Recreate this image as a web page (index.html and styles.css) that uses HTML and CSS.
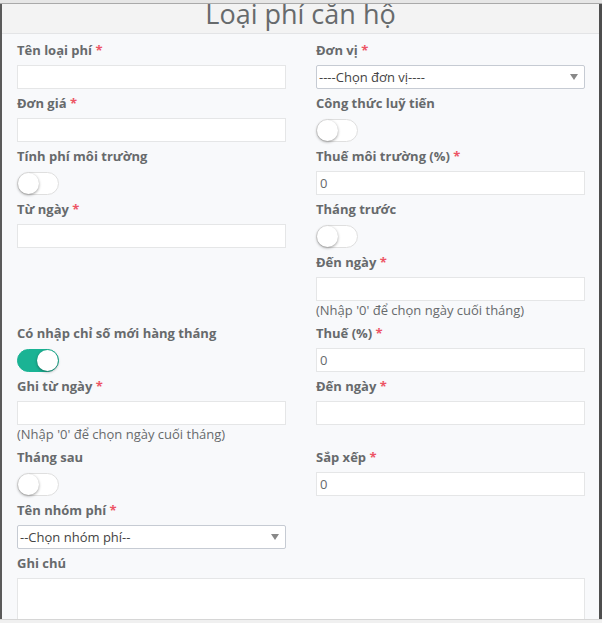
FILE: index.html
```html
<!DOCTYPE html>
<html lang="vi">
<head>
<meta charset="utf-8">
<title>Loại phí căn hộ</title>
<link rel="stylesheet" href="styles.css">
</head>
<body>
<div class="topbar"></div>
<div class="stage">
  <div class="backdrop-left"></div>
  <div class="modal">
    <div class="modal-header"><h2 class="title">Loại phí căn hộ</h2></div>
    <div class="modal-body">
      <div class="cell">
        <div class="group"><label class="lbl">Tên loại phí <span class="req">*</span></label><input class="field" type="text"></div>
      </div>
      <div class="cell">
        <div class="group"><label class="lbl">Đơn vị <span class="req">*</span></label>
          <div class="select"><span>----Chọn đơn vị----</span><span class="caret"></span></div></div>
      </div>

      <div class="cell">
        <div class="group"><label class="lbl">Đơn giá <span class="req">*</span></label><input class="field" type="text"></div>
      </div>
      <div class="cell">
        <div class="group"><label class="lbl">Công thức luỹ tiến</label><div class="switch-box"><span class="switch"><span class="knob"></span></span></div></div>
      </div>

      <div class="cell">
        <div class="group"><label class="lbl">Tính phí môi trường</label><div class="switch-box"><span class="switch"><span class="knob"></span></span></div></div>
      </div>
      <div class="cell">
        <div class="group"><label class="lbl">Thuế môi trường (%) <span class="req">*</span></label><input class="field" type="text" value="0"></div>
      </div>

      <div class="cell">
        <div class="group"><label class="lbl">Từ ngày <span class="req">*</span></label><input class="field" type="text"></div>
      </div>
      <div class="cell">
        <div class="group"><label class="lbl">Tháng trước</label><div class="switch-box"><span class="switch"><span class="knob"></span></span></div></div>
        <div class="group"><label class="lbl">Đến ngày <span class="req">*</span></label><input class="field" type="text"><p class="help">(Nhập '0' để chọn ngày cuối tháng)</p></div>
      </div>

      <div class="cell">
        <div class="group"><label class="lbl">Có nhập chỉ số mới hàng tháng</label><div class="switch-box"><span class="switch on"><span class="knob"></span></span></div></div>
      </div>
      <div class="cell">
        <div class="group"><label class="lbl">Thuế (%) <span class="req">*</span></label><input class="field" type="text" value="0"></div>
      </div>

      <div class="cell">
        <div class="group"><label class="lbl">Ghi từ ngày <span class="req">*</span></label><input class="field" type="text"><p class="help">(Nhập '0' để chọn ngày cuối tháng)</p></div>
      </div>
      <div class="cell">
        <div class="group"><label class="lbl">Đến ngày <span class="req">*</span></label><input class="field" type="text"></div>
      </div>

      <div class="cell">
        <div class="group"><label class="lbl">Tháng sau</label><div class="switch-box"><span class="switch"><span class="knob"></span></span></div></div>
      </div>
      <div class="cell">
        <div class="group"><label class="lbl">Sắp xếp <span class="req">*</span></label><input class="field" type="text" value="0"></div>
      </div>

      <div class="cell">
        <div class="group"><label class="lbl">Tên nhóm phí <span class="req">*</span></label>
          <div class="select"><span>--Chọn nhóm phí--</span><span class="caret"></span></div></div>
      </div>
      <div class="cell"></div>

      <div class="cell full">
        <div class="group"><label class="lbl">Ghi chú</label><textarea class="area"></textarea></div>
      </div>
    </div>
  </div>
  <div class="backdrop-right"></div>
</div>
<div class="bottombar"></div>
</body>
</html>
```

FILE: styles.css
```css
html, body {
  margin: 0;
  padding: 0;
  height: 100%;
}
body {
  display: flex;
  flex-direction: column;
  height: 100vh;
  overflow: hidden;
  background: #595959;
  font-family: "Open Sans", "Liberation Sans", sans-serif;
  color: #676a6c;
}
.topbar {
  flex: 0 0 3px;
  background: #e6e6e6;
  border-bottom: 1px solid #a9a9a9;
}
.stage {
  flex: 1 1 auto;
  display: flex;
  overflow: hidden;
}
.backdrop-left {
  flex: 0 0 2px;
  background: #5a5a5a;
}
.backdrop-right {
  flex: 1 1 auto;
  background: #4e4e4e;
}
.modal {
  flex: 0 0 597px;
  background: #f8f9fb;
  overflow: hidden;
}
.modal-header {
  height: 29px;
  background: #f3f3f3;
  border-bottom: 1px solid #e3e4e6;
  text-align: center;
}
.title {
  margin: 0;
  font-size: 27px;
  line-height: 20px;
  font-weight: 400;
  color: #676a6c;
}
.modal-body {
  display: grid;
  grid-template-columns: 1fr 1fr;
  column-gap: 30px;
  padding: 7px 14px 0 15px;
}
.cell.full {
  grid-column: 1 / 3;
}
.group {
  margin-bottom: 5px;
}
.lbl {
  display: block;
  font-size: 13px;
  line-height: 18px;
  font-weight: 700;
  margin-bottom: 6px;
  color: #676a6c;
}
.req {
  color: #ed5565;
}
.field {
  display: block;
  width: 100%;
  height: 24px;
  box-sizing: border-box;
  margin: 0;
  border: 1px solid #e5e6e7;
  background: #fff;
  padding: 0 3px;
  font-family: "Open Sans", "Liberation Sans", sans-serif;
  font-size: 13px;
  color: #676a6c;
  outline: none;
}
.select {
  display: flex;
  align-items: center;
  justify-content: space-between;
  height: 24px;
  box-sizing: border-box;
  border: 1px solid #c6cbd3;
  border-radius: 2px;
  background: #fff;
  padding: 0 6px 0 2px;
  font-size: 13px;
  color: #444;
}
.caret {
  width: 0;
  height: 0;
  border-top: 6px solid #888;
  border-left: 4px solid transparent;
  border-right: 4px solid transparent;
}
.switch-box {
  height: 24px;
  display: flex;
  align-items: center;
}
.switch {
  display: flex;
  align-items: center;
  width: 42px;
  height: 23px;
  box-sizing: border-box;
  border: 1px solid #dfdfdf;
  border-radius: 12px;
  background: #fff;
}
.switch.on {
  background: #1ab394;
  border-color: #1ab394;
  justify-content: flex-end;
}
.knob {
  width: 21px;
  height: 21px;
  border-radius: 50%;
  background: #fff;
  box-shadow: 0 1px 3px rgba(0, 0, 0, 0.4);
}
.help {
  margin: 0;
  font-size: 13px;
  line-height: 18px;
  color: #676a6c;
}
.area {
  display: block;
  width: 100%;
  height: 80px;
  box-sizing: border-box;
  margin: 0;
  border: 1px solid #e5e6e7;
  background: #fff;
  resize: none;
  outline: none;
}
.bottombar {
  flex: 0 0 3px;
  background: #f0f0f0;
  border-top: 1px solid #d6d6d6;
}
```
